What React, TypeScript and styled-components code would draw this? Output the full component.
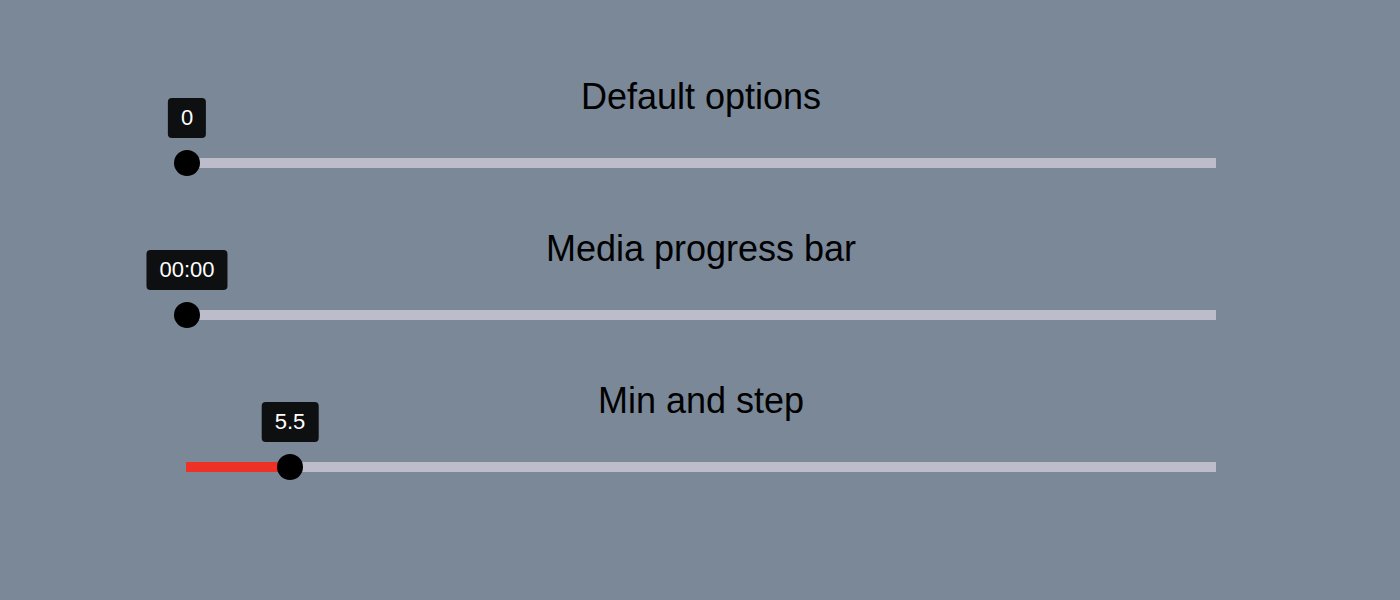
import styled, { createGlobalStyle } from "styled-components";

const GlobalStyle = createGlobalStyle`
  html, body {
    margin: 0;
    padding: 0;
    background-color: #7b8898;
    font-family: "Liberation Sans", Arial, sans-serif;
  }
`;

const Page = styled.main`
  display: flex;
  flex-direction: column;
  align-items: center;
  padding-top: 77px;
  min-height: 600px;
  box-sizing: border-box;
`;

const Section = styled.section`
  display: flex;
  flex-direction: column;
  align-items: center;
  margin-bottom: 53px;
  transform: translateX(1px);
`;

const Title = styled.h2`
  margin: 0;
  font-size: 36px;
  line-height: 40px;
  font-weight: 400;
  color: #000;
`;

const Slider = styled.div`
  position: relative;
  width: 1030px;
  height: 26px;
  margin-top: 33px;
  display: flex;
  align-items: center;
`;

const Track = styled.div`
  position: relative;
  width: 100%;
  height: 10px;
  background-color: #bdbccb;
`;

const Fill = styled.div`
  height: 100%;
  background-color: #ee3124;
`;

const Thumb = styled.div`
  position: absolute;
  top: 0;
  width: 26px;
  height: 26px;
  margin-left: -12px;
  border-radius: 50%;
  background-color: #000;
`;

const Tooltip = styled.div`
  position: absolute;
  bottom: calc(100% + 12px);
  left: 50%;
  transform: translateX(-50%);
  height: 40px;
  padding: 0 13px;
  display: flex;
  align-items: center;
  justify-content: center;
  background-color: #0e0f11;
  color: #fff;
  font-size: 22px;
  border-radius: 4px;
  white-space: nowrap;
`;

interface RangeProps {
  title: string;
  min: number;
  max: number;
  value: number;
  label: string;
  fill?: boolean;
}

function Range({ title, min, max, value, label, fill }: RangeProps) {
  const pct = ((value - min) / (max - min)) * 100;
  return (
    <Section>
      <Title>{title}</Title>
      <Slider>
        <Track>{fill && <Fill style={{ width: `${pct}%` }} />}</Track>
        <Thumb style={{ left: `${pct}%` }}>
          <Tooltip>{label}</Tooltip>
        </Thumb>
      </Slider>
    </Section>
  );
}

export default function App() {
  return (
    <>
      <GlobalStyle />
      <Page>
        <Range title="Default options" min={0} max={100} value={0} label="0" />
        <Range title="Media progress bar" min={0} max={100} value={0} label="00:00" />
        <Range title="Min and step" min={5} max={10} value={5.5} label="5.5" fill />
      </Page>
    </>
  );
}
